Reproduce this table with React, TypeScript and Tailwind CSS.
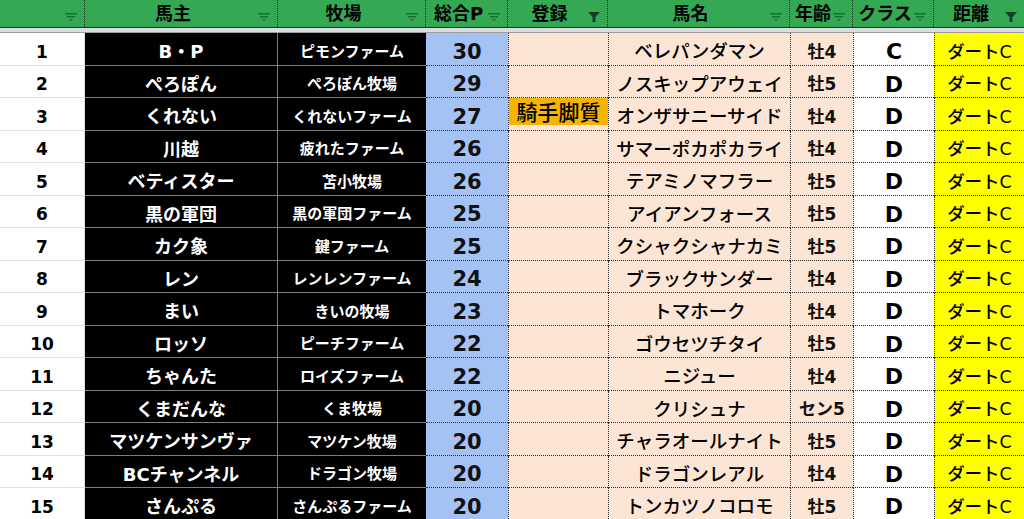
import type { ReactNode } from "react";

type Row = {
  no: number;
  owner: string;
  farm: string;
  points: number;
  entry: string;
  horse: string;
  age: string;
  cls: string;
  dist: string;
};

const rows: Row[] = [
  { no: 1, owner: "B・P", farm: "ピモンファーム", points: 30, entry: "", horse: "ベレパンダマン", age: "牡4", cls: "C", dist: "ダートC" },
  { no: 2, owner: "ぺろぽん", farm: "ぺろぽん牧場", points: 29, entry: "", horse: "ノスキップアウェイ", age: "牡5", cls: "D", dist: "ダートC" },
  { no: 3, owner: "くれない", farm: "くれないファーム", points: 27, entry: "騎手脚質", horse: "オンザサニーサイド", age: "牡4", cls: "D", dist: "ダートC" },
  { no: 4, owner: "川越", farm: "疲れたファーム", points: 26, entry: "", horse: "サマーポカポカライ", age: "牡4", cls: "D", dist: "ダートC" },
  { no: 5, owner: "ベティスター", farm: "苫小牧場", points: 26, entry: "", horse: "テアミノマフラー", age: "牡5", cls: "D", dist: "ダートC" },
  { no: 6, owner: "黒の軍団", farm: "黒の軍団ファーム", points: 25, entry: "", horse: "アイアンフォース", age: "牡5", cls: "D", dist: "ダートC" },
  { no: 7, owner: "カク象", farm: "鍵ファーム", points: 25, entry: "", horse: "クシャクシャナカミ", age: "牡5", cls: "D", dist: "ダートC" },
  { no: 8, owner: "レン", farm: "レンレンファーム", points: 24, entry: "", horse: "ブラックサンダー", age: "牡4", cls: "D", dist: "ダートC" },
  { no: 9, owner: "まい", farm: "きいの牧場", points: 23, entry: "", horse: "トマホーク", age: "牡4", cls: "D", dist: "ダートC" },
  { no: 10, owner: "ロッソ", farm: "ピーチファーム", points: 22, entry: "", horse: "ゴウセツチタイ", age: "牡5", cls: "D", dist: "ダートC" },
  { no: 11, owner: "ちゃんた", farm: "ロイズファーム", points: 22, entry: "", horse: "ニジュー", age: "牡4", cls: "D", dist: "ダートC" },
  { no: 12, owner: "くまだんな", farm: "くま牧場", points: 20, entry: "", horse: "クリシュナ", age: "セン5", cls: "D", dist: "ダートC" },
  { no: 13, owner: "マツケンサンヴァ", farm: "マツケン牧場", points: 20, entry: "", horse: "チャラオールナイト", age: "牡5", cls: "D", dist: "ダートC" },
  { no: 14, owner: "BCチャンネル", farm: "ドラゴン牧場", points: 20, entry: "", horse: "ドラゴンレアル", age: "牡4", cls: "D", dist: "ダートC" },
  { no: 15, owner: "さんぷる", farm: "さんぷるファーム", points: 20, entry: "", horse: "トンカツノコロモ", age: "牡5", cls: "D", dist: "ダートC" },
];

const cols = "grid grid-cols-[85px_193px_148px_82px_100px_182px_63px_81px_90px]";

function FilterIcon({ active }: { active?: boolean }) {
  if (active) {
    return (
      <svg width="12" height="10" viewBox="0 0 12 10" className="shrink-0">
        <path d="M0 0h12L7.5 5v5h-3V5z" fill="#173d24" />
      </svg>
    );
  }
  return (
    <svg width="12" height="10" viewBox="0 0 12 10" className="shrink-0">
      <rect x="0" y="1" width="12" height="1.5" fill="#1f6a3a" />
      <rect x="2" y="4" width="8" height="1.5" fill="#1f6a3a" />
      <rect x="4.5" y="7" width="3" height="1.5" fill="#1f6a3a" />
    </svg>
  );
}

function Head({ label, active, last }: { label?: string; active?: boolean; last?: boolean }) {
  return (
    <div
      className={
        "relative flex h-full items-center justify-center text-[18px] font-bold text-black " +
        (last ? "" : "border-r border-dotted border-r-[#18381f]")
      }
    >
      {label && <span className="pr-4">{label}</span>}
      <span className="absolute right-[7px] top-[12px]">
        <FilterIcon active={active} />
      </span>
    </div>
  );
}

function Cell({ className, children }: { className: string; children?: ReactNode }) {
  return (
    <div className={"flex items-center justify-center overflow-hidden whitespace-nowrap pt-[7px] leading-none " + className}>
      {children}
    </div>
  );
}

const dot = "border-dotted border-[#2e2e2e]";

export default function App() {
  return (
    <div
      className="h-[519px] w-[1024px] overflow-hidden bg-white"
      style={{ fontFamily: '"DejaVu Sans", "Noto Sans CJK JP", sans-serif' }}
    >
      <div className={cols + " h-[28px] border-b border-[#1d3a26] bg-[#34a853]"}>
        <Head />
        <Head label="馬主" />
        <Head label="牧場" />
        <Head label="総合P" />
        <Head label="登録" active />
        <Head label="馬名" />
        <Head label="年齢" />
        <Head label="クラス" />
        <Head label="距離" active last />
      </div>
      <div className="h-[5px] border-b border-[#9a9a9a] bg-[#dadce0]" />

      {rows.map((r) => (
        <div key={r.no} className={cols + " h-[32.5px]"}>
          <Cell className="border-b border-r border-[#e1e1e1] text-[17px] font-bold text-black">{r.no}</Cell>
          <Cell className="border-b border-r border-[#7d7d7d] bg-black text-[18px] font-bold text-white">{r.owner}</Cell>
          <Cell className="border-b border-[#7d7d7d] bg-black text-[15px] font-bold text-white">{r.farm}</Cell>
          <Cell className={"border-b bg-[#a4c2f4] text-[21px] font-bold text-[#111] " + dot}>{r.points}</Cell>
          <div className={"relative border-b border-l bg-[#fce5d5] " + dot}>
            {r.entry && (
              <div className="flex h-[27px] items-center justify-center bg-[#f6b300] pt-[3px] text-[21px] font-medium leading-none text-black">
                {r.entry}
              </div>
            )}
          </div>
          <Cell className={"border-b border-l bg-[#fce5d5] text-[18.5px] font-medium text-black " + dot}>{r.horse}</Cell>
          <Cell className={"border-b border-l bg-[#fce5d5] text-[17px] font-bold text-[#111] " + dot}>{r.age}</Cell>
          <Cell className={"border-b border-l bg-white text-[22px] font-bold text-black " + dot}>{r.cls}</Cell>
          <Cell className={"border-b border-l bg-[#ffff00] text-[17.5px] font-medium text-black " + dot}>{r.dist}</Cell>
        </div>
      ))}
    </div>
  );
}
